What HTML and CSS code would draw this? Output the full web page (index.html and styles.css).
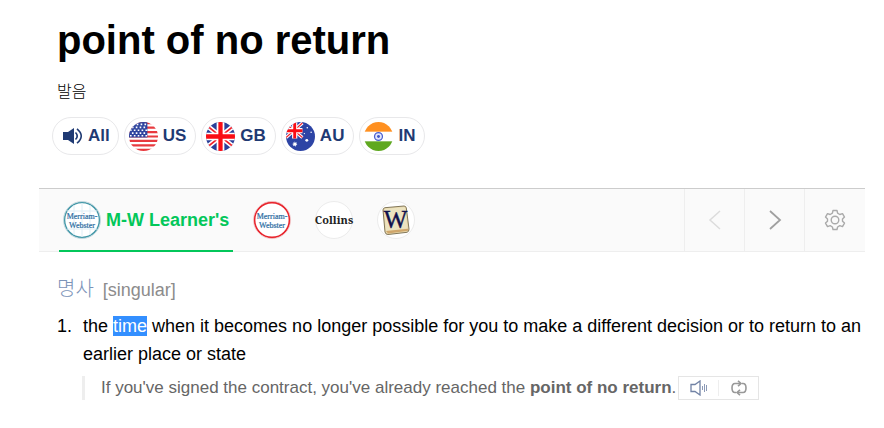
FILE: index.html
```html
<!DOCTYPE html>
<html lang="ko">
<head>
    <meta charset="UTF-8">
    <meta name="viewport" content="width=device-width, initial-scale=1.0">
    <title>point of no return</title>
    <link rel="stylesheet" href="styles.css">
</head>
<body>
    <!-- Headword and pronunciation -->
    <header class="entry">
        <h1>point of no return</h1>
        <p class="pron-label">발음</p>
        <div class="pron-list">
            <button type="button" class="pron pron-all">
                <svg width="22" height="20" viewBox="0 0 22 20">
                    <path d="M1 6h5l6-4v16l-6-4H1z" fill="#1f3a73"/>
                    <path d="M13.500 6.500q3.500 3.500 0 7M15 2.800q8.500 7.200 0 14.400" fill="none" stroke="#1f3a73" stroke-width="1.600"/>
                </svg>
                All
            </button>
            <button type="button" class="pron">
                <svg class="flag" viewBox="0 0 30 30">
                    <rect width="30" height="30" fill="#fff"/>
                    <path d="M0 1.2h30M0 5.8h30M0 10.4h30M0 15h30M0 19.6h30M0 24.2h30M0 28.8h30" stroke="#e83a3f" stroke-width="2.3"/>
                    <rect width="19" height="16" fill="#2f459f"/>
                    <path d="M8 2.5h11M3 5.5h16M1 8.5h18M3 11.5h16M1 14.2h18" stroke="#fff" stroke-width="1.7" stroke-dasharray="1.7 2.3"/>
                </svg>
                US
            </button>
            <button type="button" class="pron">
                <svg class="flag" viewBox="0 0 30 30">
                    <rect width="30" height="30" fill="#2b419a"/>
                    <path d="M0 3l30 24M0 27L30 3" stroke="#fff" stroke-width="5"/>
                    <path d="M0 3l30 24M0 27L30 3" stroke="#f0222c" stroke-width="1.8"/>
                    <path d="M15 0v30M0 15h30" stroke="#fff" stroke-width="8"/>
                    <path d="M15 0v30M0 15h30" stroke="#fa0d14" stroke-width="4.4"/>
                </svg>
                GB
            </button>
            <button type="button" class="pron">
                <svg class="flag" viewBox="0 0 30 30">
                    <rect width="30" height="30" fill="#2d44a5"/>
                    <path d="M0 2l17 14M0 16L17 1" stroke="#fff" stroke-width="3.4"/>
                    <path d="M0 2l17 14M0 16L17 1" stroke="#f0222c" stroke-width="1.2"/>
                    <path d="M9 0v17M0 9h17" stroke="#fff" stroke-width="5.4"/>
                    <path d="M9 0v17M0 9h17" stroke="#fa0d14" stroke-width="3"/>
                    <g fill="#fff">
                        <path d="M9 20l.8 1.500 1.600-.3-.8 1.500 1.200 1-1.600.3-.2 1.600-1.200-1.200-1.500.7.5-1.600-1.500-.7 1.600-.5-.2-1.600 1.200 1z"/>
                        <circle cx="22" cy="6" r=".8"/>
                        <circle cx="19" cy="12" r=".7"/>
                        <circle cx="26" cy="10.500" r=".8"/>
                        <circle cx="21.500" cy="19" r="1.500"/>
                    </g>
                </svg>
                AU
            </button>
            <button type="button" class="pron">
                <svg class="flag" viewBox="0 0 30 30">
                    <rect width="30" height="30" fill="#fff"/>
                    <rect width="30" height="10" fill="#ff9020"/>
                    <rect y="20" width="30" height="10" fill="#5fa820"/>
                    <circle cx="15" cy="15" r="4.100" fill="#e2e6fa" stroke="#4a5fd0" stroke-width="1.300"/>
                    <circle cx="15" cy="15" r="1.500" fill="#3f55c8"/>
                </svg>
                IN
            </button>
        </div>
    </header>

    <!-- Dictionary tabs -->
    <nav class="dict-bar">
        <div class="tabs">
            <a href="#learners" class="tab active">
                <svg class="logo" viewBox="0 0 38 38">
                    <circle cx="19" cy="19" r="17.500" fill="#fff" stroke="#4498a8" stroke-width="1.600"/>
                    <path d="M11 4v30M19 2v34M27 4v30M4 10h30M4 28h30" stroke="#dfeef6" stroke-width="1"/>
                    <circle cx="19" cy="19" r="18.500" fill="none" stroke="#c3d8df" stroke-width="1"/>
                    <text class="mw" x="19" y="18">Merriam-</text>
                    <text class="mw" x="19" y="27">Webster</text>
                </svg>
                M-W Learner's
            </a>
            <a href="#webster" class="tab">
                <svg class="logo" viewBox="0 0 38 38">
                    <circle cx="19" cy="19" r="17.500" fill="#fff" stroke="#e8252d" stroke-width="1.800"/>
                    <circle cx="19" cy="19" r="18.600" fill="none" stroke="#f0c4c6" stroke-width=".8"/>
                    <text class="mw" x="19" y="18">Merriam-</text>
                    <text class="mw" x="19" y="27">Webster</text>
                </svg>
            </a>
            <a href="#collins" class="tab">
                <svg class="logo" viewBox="0 0 38 38">
                    <circle cx="19" cy="19" r="18.500" fill="#fff" stroke="#ececec"/>
                    <text class="collins" x="19" y="23">Collins</text>
                </svg>
            </a>
            <a href="#wiktionary" class="tab">
                <svg class="logo" viewBox="0 0 38 38">
                    <circle cx="19" cy="19" r="18.500" fill="#fff" stroke="#ececec"/>
                    <path d="M6 9q0-2 2-2.300L27 5q2 0 2.300 2L32 28q0 3-2 3.300L11 33.500q-2.500 0-3-2.500z" fill="#e9d9ab" stroke="#82775a"/>
                    <path d="M7.500 9q0-1 1-1.200L27 6.200q1 0 1.200 1l2.300 20.300L9 30z" fill="#ece3c0"/>
                    <path d="M9 30l22-2.300v2L11 32.500z" fill="#cfa66b"/>
                    <text class="wiki" x="18.500" y="27">W</text>
                </svg>
            </a>
        </div>
        <div class="tools">
            <button type="button" class="tool" aria-label="이전">
                <svg width="20" height="20" viewBox="0 0 20 20"><path d="M15 1L5 10l10 9" fill="none" stroke="#dcdcdc" stroke-width="1.500"/></svg>
            </button>
            <button type="button" class="tool" aria-label="다음">
                <svg width="20" height="20" viewBox="0 0 20 20"><path d="M5 1l10 9-10 9" fill="none" stroke="#a0a0a0" stroke-width="1.800"/></svg>
            </button>
            <button type="button" class="tool" aria-label="설정">
                <svg width="22" height="22" viewBox="0 0 22 22" fill="none" stroke="#aaa" stroke-width="1.400" stroke-linejoin="round">
                    <path d="M9 1.500h4l.6 2.700 2.200 1.300 2.700-.9 2 3.500-2 1.900v2.200l2 1.900-2 3.500-2.700-.9-2.200 1.300-.6 2.500H9l-.6-2.500-2.200-1.300-2.700.9-2-3.500 2-1.900v-2.200l-2-1.900 2-3.500 2.700.9 2.200-1.300z"/>
                    <circle cx="11" cy="11" r="3.800"/>
                </svg>
            </button>
        </div>
    </nav>

    <!-- Definitions -->
    <main class="meaning">
        <p class="grammar"><span class="pos">명사</span> [singular]</p>
        <ol class="senses">
            <li>
                <span class="num">1.</span>
                <div class="sense">
                    <p class="def">the <mark>time</mark> when it becomes no longer possible for you to make a different decision or to return to an earlier place or state</p>
                    <div class="example">
                        <p>If you've signed the contract, you've already reached the <strong>point of no return</strong>.</p>
                        <div class="player">
                            <button type="button" aria-label="듣기">
                                <svg width="18" height="16" viewBox="0 0 18 16" fill="none">
                                    <path d="M1 4.500h4l5-3.500v14l-5-3.500H1z" stroke="#7182a5" stroke-width="1.300"/>
                                    <path d="M12.500 6v4M14.500 4v8M16.500 5v6" stroke="#8b99b5" stroke-width="1"/>
                                </svg>
                            </button>
                            <button type="button" aria-label="반복 듣기">
                                <svg width="18" height="16" viewBox="0 0 18 16" fill="none" stroke="#999" stroke-width="1.600">
                                    <path d="M6 12.500H5Q2 12.500 2 8t3-4.500h5M12 3.500h1q3 0 3 4.500t-3 4.500H8"/>
                                    <path d="M8 .8l3 2.700-3 2.700M10 9.800l-3 2.700 3 2.700"/>
                                </svg>
                            </button>
                        </div>
                    </div>
                </div>
            </li>
        </ol>
    </main>
</body>
</html>
```

FILE: styles.css
```css
* {
    box-sizing: border-box;
}

body {
    margin: 0;
    padding: 17px 19px 24px 39px;
    background: #fff;
    color: #000;
    font-family: "Liberation Sans", Arial, "Noto Sans CJK KR", sans-serif;
    font-size: 18px;
    line-height: 28px;
}

h1, p, ol {
    margin: 0;
    padding: 0;
}

button {
    border: none;
    background: none;
    padding: 0;
    font-family: inherit;
    cursor: pointer;
}

svg {
    display: block;
    flex-shrink: 0;
}

h1 {
    padding-left: 18px;
    font-size: 40px;
    line-height: 46px;
}

.pron-label {
    margin-top: 17px;
    padding-left: 18px;
    font-size: 16px;
    font-weight: 300;
    line-height: 24px;
}

.pron-list {
    display: flex;
    gap: 5px;
    margin: 13px 0 33px;
    padding-left: 13px;
}

.pron {
    display: flex;
    align-items: center;
    gap: 5px;
    height: 38px;
    padding: 0 9px 0 4px;
    border: 1px solid #e8e8ea;
    border-radius: 19px;
    background: #fff;
    color: #1f3a73;
    font-size: 17px;
    font-weight: bold;
}

.pron-all {
    gap: 4px;
    padding: 0 8px 0 9px;
}

.flag {
    width: 29px;
    height: 29px;
    border-radius: 50%;
}

.dict-bar {
    display: flex;
    justify-content: space-between;
    height: 64px;
    border-top: 1px solid #ccc;
    border-bottom: 1px solid #eee;
    background: #fafafa;
}

.tabs {
    display: flex;
    gap: 20px;
    padding-left: 20px;
}

.tab {
    display: flex;
    align-items: center;
    gap: 5px;
    height: 63px;
    padding: 0 4px 1px 0;
    color: #03c75a;
    font-weight: bold;
    text-decoration: none;
}

.tab.active {
    padding-left: 4px;
    box-shadow: inset 0 -2px #03c75a;
}

.logo {
    width: 38px;
    height: 38px;
    overflow: visible;
}

.logo text {
    font-family: "Liberation Serif", serif;
    font-weight: normal;
    text-anchor: middle;
}

.logo .mw {
    fill: #286a9f;
    stroke: #286a9f;
    stroke-width: .2px;
    font-size: 8px;
}

.logo .collins {
    fill: #222;
    font-family: "Noto Serif", "Liberation Serif", serif;
    font-size: 11px;
    font-weight: bold;
}

.logo .wiki {
    fill: #10104c;
    stroke: #10104c;
    stroke-width: .4px;
    font-size: 25px;
}

.tools {
    display: flex;
    padding-right: 1px;
}

.tool {
    display: flex;
    align-items: center;
    justify-content: center;
    width: 60px;
    border-left: 1px solid #eee;
}

.meaning {
    padding: 24px 0 0 18px;
}

.grammar {
    color: #8c8c8c;
}

.pos {
    margin-right: 4px;
    color: #7b93b8;
    font-size: 20px;
    font-weight: 300;
    line-height: 20px;
}

.senses {
    margin-top: 8px;
    list-style: none;
}

.senses li {
    display: flex;
}

.num {
    width: 26px;
    flex-shrink: 0;
}

mark {
    background: #338fff;
    color: #fff;
}

.example {
    display: flex;
    align-items: center;
    gap: 2px;
    margin: 8px 0 0 -1px;
    padding-left: 16px;
    border-left: 3px solid #eee;
    color: #666;
    font-size: 17px;
    line-height: 24px;
}

.player {
    display: flex;
    align-items: center;
    width: 81px;
    height: 24px;
    border: 1px solid #e5e5e5;
}

.player button {
    display: flex;
    flex: 1;
    justify-content: center;
}

.player button + button {
    border-left: 1px solid #eee;
}
```
